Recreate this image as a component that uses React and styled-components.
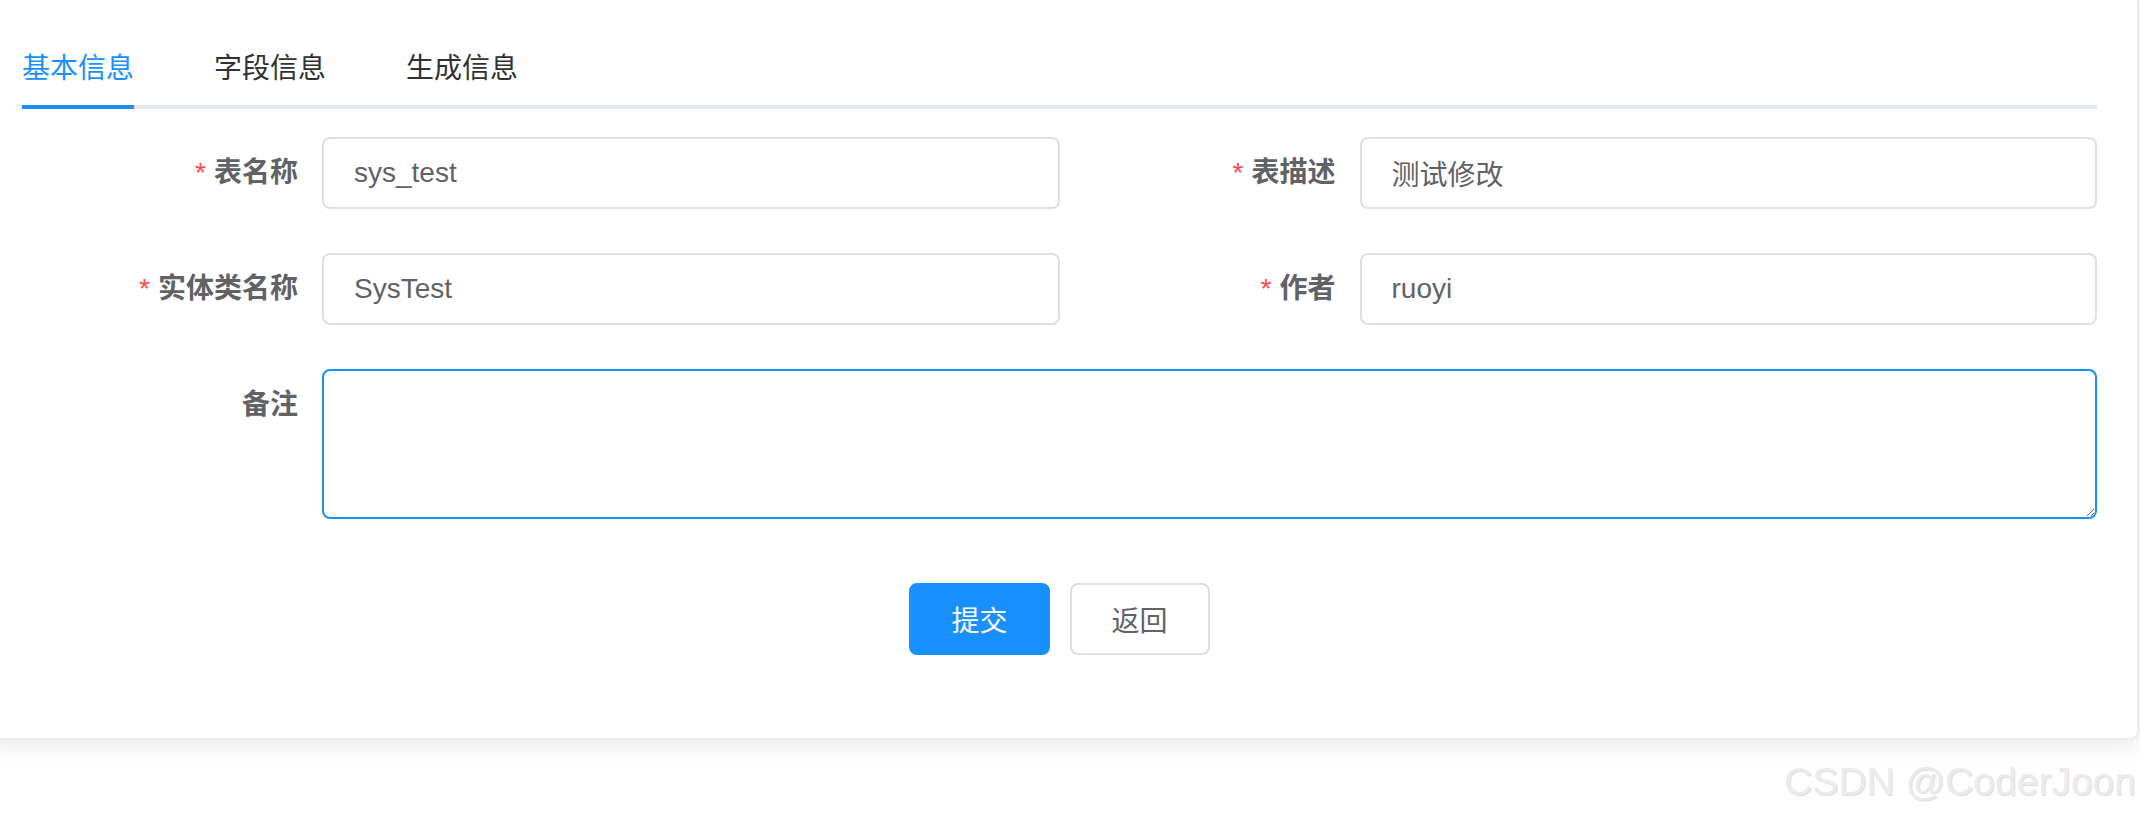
import React from 'react';
import styled, { createGlobalStyle } from 'styled-components';

const GlobalStyle = createGlobalStyle`
    html, body {
        margin: 0;
        padding: 0;
        background: #ffffff;
    }
    * {
        box-sizing: border-box;
    }
`;

const FONT = `"Liberation Sans", "Noto Sans CJK SC", sans-serif`;

const Page = styled.div`
    position: relative;
    width: 2140px;
    height: 821px;
    overflow: hidden;
    background: #ffffff;
    font-family: ${FONT};
`;

const Card = styled.div`
    width: 2159px;
    margin-left: -20px;
    margin-top: -13px;
    padding: 40px;
    background: #ffffff;
    border: 2px solid #e6ebf5;
    border-radius: 8px;
    box-shadow: 0 4px 24px rgba(0, 0, 0, 0.1);
`;

/* tabs */
const TabHeader = styled.div`
    position: relative;
    display: flex;
    height: 80px;
    margin-bottom: 28px;

    &::after {
        content: '';
        position: absolute;
        left: 0;
        right: 0;
        bottom: 0;
        height: 4px;
        background: #e4e7ed;
    }
`;

const TabItem = styled.div`
    position: relative;
    z-index: 1;
    height: 80px;
    line-height: 80px;
    padding: 0 40px;
    font-size: 28px;
    color: ${(props) => (props.active ? '#1890ff' : '#303133')};

    &:first-child {
        padding-left: 0;
    }
    &:last-child {
        padding-right: 0;
    }
`;

const ActiveBar = styled.div`
    position: absolute;
    left: 0;
    bottom: 0;
    width: 112px;
    height: 4px;
    background: #1890ff;
    z-index: 2;
`;

/* form */
const Form = styled.div`
    display: flex;
    flex-direction: column;
`;

const Row = styled.div`
    display: grid;
    grid-template-columns: 1fr 1fr;
`;

const FormItem = styled.div`
    display: flex;
    align-items: flex-start;
    margin-bottom: 44px;
`;

const Label = styled.label`
    flex: 0 0 300px;
    padding-right: 24px;
    text-align: right;
    font-size: 28px;
    line-height: 72px;
    font-weight: 700;
    color: #606266;

    &::before {
        content: ${(props) => (props.required ? "'*'" : 'none')};
        color: #ff4949;
        margin-right: 8px;
        font-weight: 400;
    }
`;

const Field = styled.div`
    flex: 1;
    min-width: 0;
`;

const Input = styled.input`
    display: block;
    width: 100%;
    height: 72px;
    padding: 0 30px;
    border: 2px solid #dcdfe6;
    border-radius: 8px;
    outline: none;
    font-family: ${FONT};
    font-size: 28px;
    color: #606266;
    background: #ffffff;
`;

const TextArea = styled.textarea`
    display: block;
    width: 100%;
    height: 150px;
    padding: 10px 30px;
    border: 2px solid #1890ff;
    border-radius: 8px;
    outline: none;
    resize: vertical;
    font-family: ${FONT};
    font-size: 28px;
    color: #606266;
    background: #ffffff;
`;

/* 버튼 줄: 위 항목 margin 44 + 20 */
const ButtonRow = styled.div`
    display: flex;
    justify-content: center;
    gap: 20px;
    margin: 20px 0 43px;
`;

const Button = styled.button`
    height: 72px;
    padding: 0 40px;
    border-radius: 8px;
    font-family: ${FONT};
    font-size: 28px;
    cursor: pointer;
    border: 2px solid ${(props) => (props.variant === 'primary' ? '#1890ff' : '#dcdfe6')};
    background: ${(props) => (props.variant === 'primary' ? '#1890ff' : '#ffffff')};
    color: ${(props) => (props.variant === 'primary' ? '#ffffff' : '#606266')};
`;

const Watermark = styled.div`
    position: absolute;
    right: 4px;
    top: 760px;
    font-family: "Liberation Sans", sans-serif;
    font-size: 39px;
    color: #ebebeb;
    text-shadow: 1px 1px 1px rgba(0, 0, 0, 0.14);
    white-space: nowrap;
`;

const tabs = ['基本信息', '字段信息', '生成信息'];

export default function App() {
    return (
        <Page>
            <GlobalStyle />
            <Card>
                <TabHeader>
                    {tabs.map((t, i) => (
                        <TabItem key={t} active={i === 0}>
                            {t}
                        </TabItem>
                    ))}
                    <ActiveBar />
                </TabHeader>

                <Form>
                    <Row>
                        <FormItem>
                            <Label required>表名称</Label>
                            <Field>
                                <Input defaultValue="sys_test" />
                            </Field>
                        </FormItem>
                        <FormItem>
                            <Label required>表描述</Label>
                            <Field>
                                <Input defaultValue="测试修改" />
                            </Field>
                        </FormItem>
                    </Row>
                    <Row>
                        <FormItem>
                            <Label required>实体类名称</Label>
                            <Field>
                                <Input defaultValue="SysTest" />
                            </Field>
                        </FormItem>
                        <FormItem>
                            <Label required>作者</Label>
                            <Field>
                                <Input defaultValue="ruoyi" />
                            </Field>
                        </FormItem>
                    </Row>
                    <FormItem>
                        <Label>备注</Label>
                        <Field>
                            <TextArea />
                        </Field>
                    </FormItem>
                    <ButtonRow>
                        <Button variant="primary">提交</Button>
                        <Button>返回</Button>
                    </ButtonRow>
                </Form>
            </Card>
            <Watermark>CSDN @CoderJoon</Watermark>
        </Page>
    );
}
